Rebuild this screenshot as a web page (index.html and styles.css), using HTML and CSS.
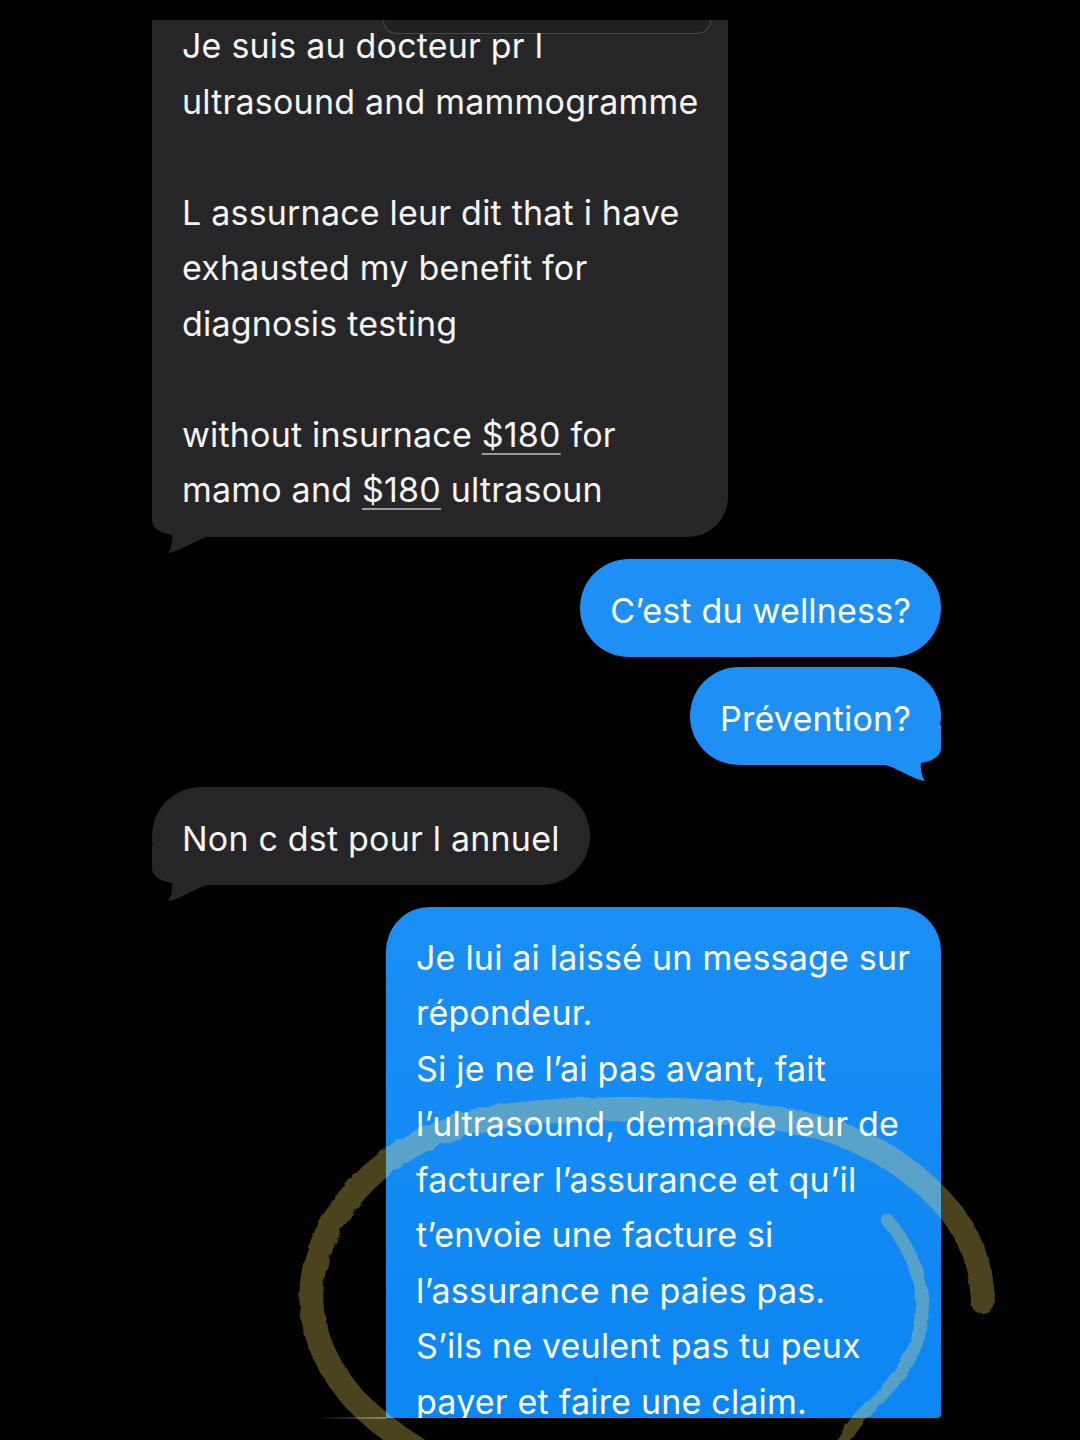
FILE: index.html
```html
<!DOCTYPE html>
<html lang="fr">
<head>
<meta charset="utf-8">
<title>Messages</title>
<link rel="stylesheet" href="styles.css">
</head>
<body>
<div class="thread">
  <div class="msg them first">
    <div class="reply-edge"></div>
    <p class="txt body">Je suis au docteur pr l<br>ultrasound and mammogramme<br><br>L assurnace leur dit that i have<br>exhausted my benefit for<br>diagnosis testing<br><br>without insurnace <span class="link">$180</span> for<br>mamo and <span class="link">$180</span> ultrasoun</p>
    <svg class="tail tail-left" width="60" height="60" viewBox="0 0 60 60"><path d="M0,0 L0,23 C0,31 8,36 20,38 C21,45 19,52 16,56 C26,55 38,46 55,40 L55,0 Z"/></svg>
  </div>
  <div class="msg me"><span class="txt">C’est du wellness?</span></div>
  <div class="msg me close"><span class="txt">Prévention?</span>
    <svg class="tail tail-right" width="60" height="60" viewBox="0 0 60 60"><path d="M0,0 L0,23 C0,31 8,36 20,38 C21,45 19,52 16,56 C26,55 38,46 55,40 L55,0 Z"/></svg>
  </div>
  <div class="msg them"><span class="txt">Non c dst pour l annuel</span>
    <svg class="tail tail-left" width="60" height="60" viewBox="0 0 60 60"><path d="M0,0 L0,23 C0,31 8,36 20,38 C21,45 19,52 16,56 C26,55 38,46 55,40 L55,0 Z"/></svg>
  </div>
  <div class="msg me long"><span class="txt">Je lui ai laissé un message sur<br>répondeur.<br>Si je ne l’ai pas avant, fait<br>l’ultrasound, demande leur de<br>facturer l’assurance et qu’il<br>t’envoie une facture si<br>l’assurance ne paies pas.<br>S’ils ne veulent pas tu peux<br>payer et faire une claim.</span></div>
</div>
<div class="hairline"></div>
<svg class="annotation" width="1080" height="1440" viewBox="0 0 1080 1440">
  <defs>
    <filter id="rough" x="-5%" y="-5%" width="110%" height="110%">
      <feTurbulence type="fractalNoise" baseFrequency="0.08" numOctaves="2" seed="3"/>
      <feDisplacementMap in="SourceGraphic" scale="5"/>
    </filter>
  </defs>
  <g class="ink" filter="url(#rough)">
    <path class="stroke-main" d="M983,1302 C982,1265 968,1230 945,1205 C905,1160 850,1127 760,1116 C680,1107 560,1105 480,1120 C400,1138 340,1190 318,1255 C300,1310 320,1360 355,1400 C385,1430 415,1448 450,1470"/>
    <path class="stroke-thin" d="M887,1220 C905,1240 920,1270 922,1300 C924,1330 915,1352 902,1370 C890,1388 875,1402 862,1415 C852,1426 846,1436 838,1450"/>
  </g>
</svg>
</body>
</html>
```
FILE: styles.css
```css
html, body {
  margin: 0;
  padding: 0;
}

body {
  background: #000;
  width: 1080px;
  height: 1440px;
  overflow: hidden;
  position: relative;
  font-family: "Inter", "Noto Sans", "Liberation Sans", sans-serif;
  -webkit-font-smoothing: antialiased;
}

.thread {
  display: flex;
  flex-direction: column;
  padding: 20px 139px 0 152px;
}

.msg {
  position: relative;
  box-sizing: border-box;
  font-size: 34px;
  letter-spacing: 0.2px;
  line-height: 55.5px;
  color: #fff;
  padding: 24px 30px 18.5px;
  border-radius: 49px;
  white-space: nowrap;
  margin-top: 22px;
}

.txt {
  position: relative;
  z-index: 1;
}

.them {
  align-self: flex-start;
  background: #262628;
  color: #f4f4f4;
}

.me {
  align-self: flex-end;
  background: #1e8ff5;
}

.close {
  margin-top: 10px;
}

.first {
  margin-top: 0;
  padding-top: 0;
  padding-bottom: 19px;
  border-radius: 0 0 40px 40px;
}

.body {
  margin: -2px 0 0;
}

.link {
  text-decoration: underline;
  text-decoration-color: #9a9a9e;
  text-decoration-thickness: 2px;
  text-underline-offset: 6px;
}

.reply-edge {
  position: absolute;
  top: 0;
  left: 231px;
  width: 326px;
  height: 13px;
  border: 1.5px solid #48484b;
  border-top: none;
  border-radius: 0 0 20px 20px;
  background: #202022;
}

.tail {
  position: absolute;
  bottom: -20px;
  overflow: visible;
}

.tail-left {
  left: 0;
}

.tail-left path {
  fill: #262628;
}

.tail-right {
  right: 0;
  transform: scaleX(-1);
}

.tail-right path {
  fill: #1e8ff5;
}

.long {
  width: 555px;
  height: 511px;
  padding-top: 23px;
  overflow: hidden;
  border-radius: 44px 44px 4px 0;
  background: linear-gradient(180deg, #1a8ff5 0%, #0c86f3 100%);
}

.hairline {
  position: absolute;
  left: 318px;
  top: 1417px;
  width: 68px;
  height: 2px;
  background: linear-gradient(90deg, rgba(90, 90, 95, 0) 0%, #5a5a5f 100%);
}

.annotation {
  position: absolute;
  top: 0;
  left: 0;
  pointer-events: none;
}

.ink path {
  fill: none;
  stroke: rgba(247, 220, 100, 0.3);
  stroke-linecap: round;
  stroke-linejoin: round;
}

.stroke-main {
  stroke-width: 24px;
}

.stroke-thin {
  stroke-width: 13px;
}
```
